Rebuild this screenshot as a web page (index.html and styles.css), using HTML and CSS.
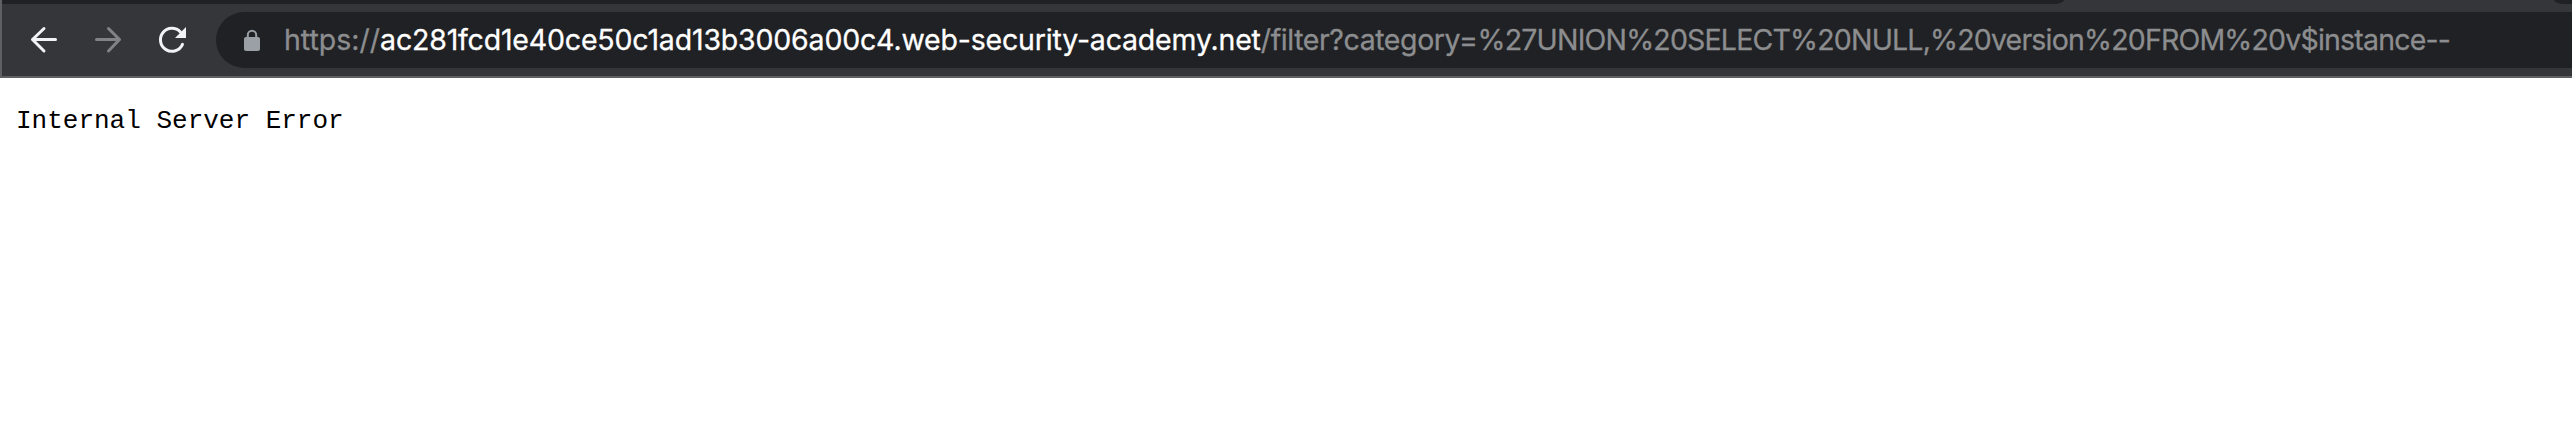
FILE: index.html
```
<!DOCTYPE html>
<html lang="en">
<head>
<meta charset="utf-8">
<title>Internal Server Error</title>
<link rel="stylesheet" href="styles.css">
</head>
<body>
<header class="browser">
  <div class="tabs"><div class="tab-left"></div><div class="tab-right"></div></div>
  <div class="toolbar">
    <svg class="nav" viewBox="0 0 32 32"><path d="M27.5 15.5H4.5M16 4.5L4.5 15.5L16 27"/></svg>
    <svg class="nav disabled" viewBox="0 0 32 32"><path d="M4.5 15.5H27.5M16.5 4.5L27.5 15.5L16.5 27"/></svg>
    <svg class="nav" viewBox="0 0 32 32"><path d="M26.5 20.4A11.5 11.5 0 1 1 24.4 8"/><path class="solid" d="M30 3V14H19Z"/></svg>
    <div class="address">
      <svg class="lock" viewBox="0 0 18 24"><rect x="1" y="9" width="16" height="14" rx="2"/><path d="M4.8 10V7A4.2 4.2 0 0 1 13.2 7V10"/></svg>
      <div class="url"><span class="scheme">https://</span><span class="host">ac281fcd1e40ce50c1ad13b3006a00c4.web-security-academy.net</span><span class="path">/filter?category=</span><span class="query">%27UNION%20SELECT%20NULL,%20version%20FROM%20v$instance--</span></div>
    </div>
  </div>
</header>
<main class="page"><pre class="message">Internal Server Error</pre></main>
</body>
</html>
```
FILE: styles.css
```
body {
  margin: 0;
  background: #fff;
  overflow: hidden;
}
.browser {
  box-sizing: border-box;
  height: 78px;
  border-left: 2px solid #5f6064;
  border-bottom: 2px solid #5f6064;
  background: #35363a;
}
.tabs {
  display: flex;
  justify-content: space-between;
  height: 4px;
}
.tab-left {
  width: 2062px;
  background: #202124;
  border-bottom-right-radius: 13px 5px;
}
.tab-right {
  width: 18px;
  background: #202124;
  border-bottom-left-radius: 13px 5px;
}
.toolbar {
  display: flex;
  align-items: center;
  height: 72px;
  padding-left: 26px;
}
.nav {
  width: 32px;
  height: 32px;
  margin-right: 32px;
  flex: none;
  fill: none;
  stroke: #f1f3f4;
  stroke-width: 3;
  stroke-linecap: round;
  stroke-linejoin: round;
}
.disabled {
  stroke: #828386;
}
.solid {
  fill: #f1f3f4;
  stroke: none;
}
.address {
  display: flex;
  align-items: center;
  flex: 1;
  height: 56px;
  margin-left: -4px;
  border-radius: 28px 0 0 28px;
  background: #202124;
}
.lock {
  width: 18px;
  height: 24px;
  margin-left: 27px;
  flex: none;
  fill: #9aa0a6;
}
.lock path {
  fill: none;
  stroke: #9aa0a6;
  stroke-width: 2;
}
.url {
  margin-left: 23px;
  font: 400 28.5px/58px Inter, sans-serif;
  white-space: nowrap;
  color: #8c8d8f;
  -webkit-text-stroke: 0.3px currentColor;
}
.host {
  color: #fff;
  letter-spacing: -0.18px;
}
.path {
  letter-spacing: -0.41px;
}
.query {
  letter-spacing: -0.81px;
}
.message {
  margin: 0;
  padding: 27px 16px;
  font: 26px/32px "Liberation Mono", "Courier New", monospace;
  color: #000;
}
```
